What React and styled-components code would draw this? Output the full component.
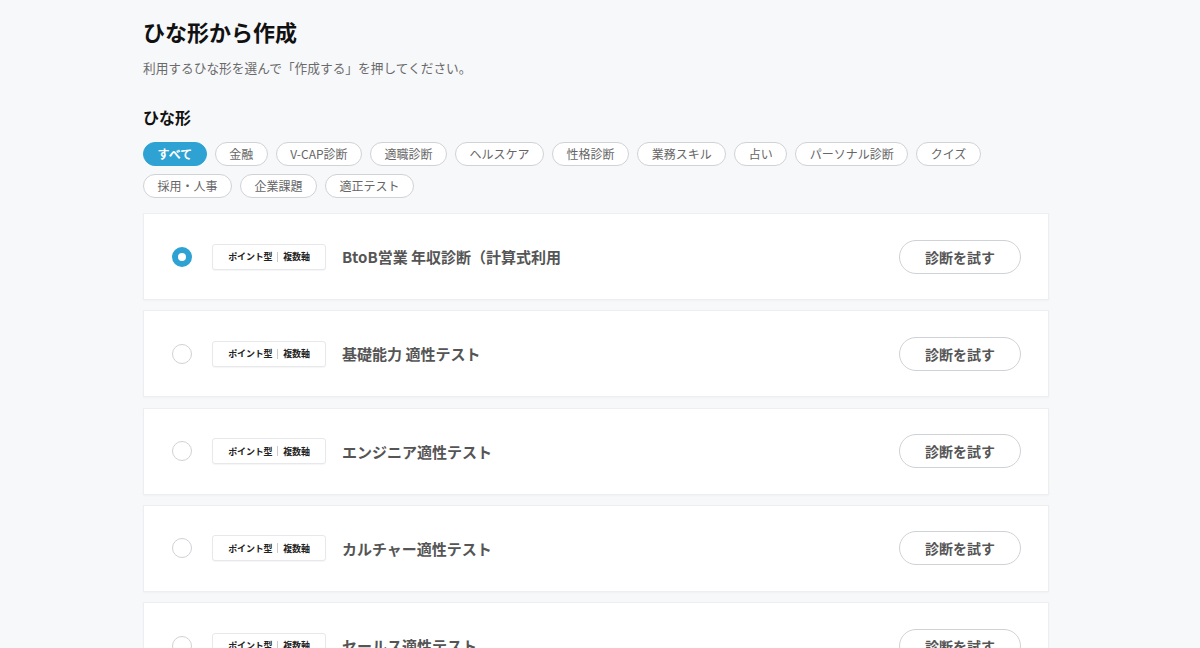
import React from 'react';
import styled, { createGlobalStyle } from 'styled-components';

const GlobalStyle = createGlobalStyle`
  html, body {
    margin: 0;
    padding: 0;
    background: #f7f8fa;
    font-family: "Noto Sans CJK JP", "Noto Sans", sans-serif;
    color: #222;
  }
`;

const Page = styled.div`
  width: 906px;
  margin: 0 auto 0 143px;
  padding-top: 14px;
`;

const Title = styled.h1`
  margin: 0;
  font-size: 22px;
  font-weight: 700;
  line-height: 34px;
  color: #111;
`;

const Lead = styled.p`
  margin: 11px 0 0;
  font-size: 12.7px;
  line-height: 18px;
  color: #6a6a6a;
`;

const SectionTitle = styled.h2`
  margin: 29px 0 0;
  font-size: 16px;
  font-weight: 700;
  line-height: 22px;
  color: #111;
`;

const Chips = styled.div`
  display: flex;
  flex-wrap: wrap;
  gap: 8px 8px;
  margin-top: 14px;
  width: 860px;
`;

const Chip = styled.button`
  height: 24px;
  padding: 0 13.5px;
  border-radius: 12px;
  border: 1px solid ${p => (p.$active ? '#2ea3d3' : '#cfd2d6')};
  background: ${p => (p.$active ? '#2ea3d3' : '#fff')};
  color: ${p => (p.$active ? '#fff' : '#666')};
  font-family: inherit;
  font-size: 12px;
  font-weight: ${p => (p.$active ? 700 : 400)};
  line-height: 22px;
  white-space: nowrap;
  cursor: pointer;
`;

const List = styled.div`
  display: flex;
  flex-direction: column;
  gap: 10.25px;
  margin-top: 15px;
`;

const Card = styled.div`
  display: flex;
  align-items: center;
  height: 87px;
  box-sizing: border-box;
  padding: 0 27px 0 28px;
  background: #fff;
  border: 1px solid #eceef1;
  box-shadow: 0 1px 2px rgba(0, 0, 0, 0.03);
  flex-shrink: 0;
`;

const Radio = styled.span`
  width: 20px;
  height: 20px;
  box-sizing: border-box;
  border-radius: 50%;
  flex-shrink: 0;
  border: ${p => (p.$checked ? '6px solid #2ea3d3' : '1.5px solid #cfd2d6')};
  background: #fff;
`;

const Badge = styled.span`
  display: flex;
  align-items: center;
  justify-content: center;
  gap: 5px;
  width: 114px;
  height: 26px;
  box-sizing: border-box;
  margin-left: 20px;
  border: 1px solid #e6e8eb;
  border-radius: 3px;
  background: #fff;
  box-shadow: 0 1px 1px rgba(0, 0, 0, 0.04);
  font-size: 9px;
  font-weight: 700;
  color: #222;
  letter-spacing: -0.2px;
`;

const Divider = styled.span`
  width: 1px;
  height: 10px;
  background: #ccc;
`;

const Name = styled.span`
  flex: 1;
  margin-left: 16px;
  font-size: 15px;
  font-weight: 700;
  color: #555;
`;

const TryButton = styled.button`
  width: 122px;
  height: 34px;
  border-radius: 17px;
  border: 1px solid #cfd2d6;
  background: #fff;
  color: #555;
  font-family: inherit;
  font-size: 14px;
  font-weight: 700;
  cursor: pointer;
`;

const filters = [
  'すべて', '金融', 'V-CAP診断', '適職診断', 'ヘルスケア', '性格診断', '業務スキル',
  '占い', 'パーソナル診断', 'クイズ', '採用・人事', '企業課題', '適正テスト',
];

const templates = [
  'BtoB営業 年収診断（計算式利用',
  '基礎能力 適性テスト',
  'エンジニア適性テスト',
  'カルチャー適性テスト',
  'セールス適性テスト',
];

export default function App() {
  return (
    <>
      <GlobalStyle />
      <Page>
        <Title>ひな形から作成</Title>
        <Lead>利用するひな形を選んで「作成する」を押してください。</Lead>
        <SectionTitle>ひな形</SectionTitle>
        <Chips>
          {filters.map((f, i) => (
            <Chip key={f} $active={i === 0}>{f}</Chip>
          ))}
        </Chips>
        <List>
          {templates.map((t, i) => (
            <Card key={t}>
              <Radio $checked={i === 0} />
              <Badge>ポイント型<Divider />複数軸</Badge>
              <Name>{t}</Name>
              <TryButton>診断を試す</TryButton>
            </Card>
          ))}
        </List>
      </Page>
    </>
  );
}
